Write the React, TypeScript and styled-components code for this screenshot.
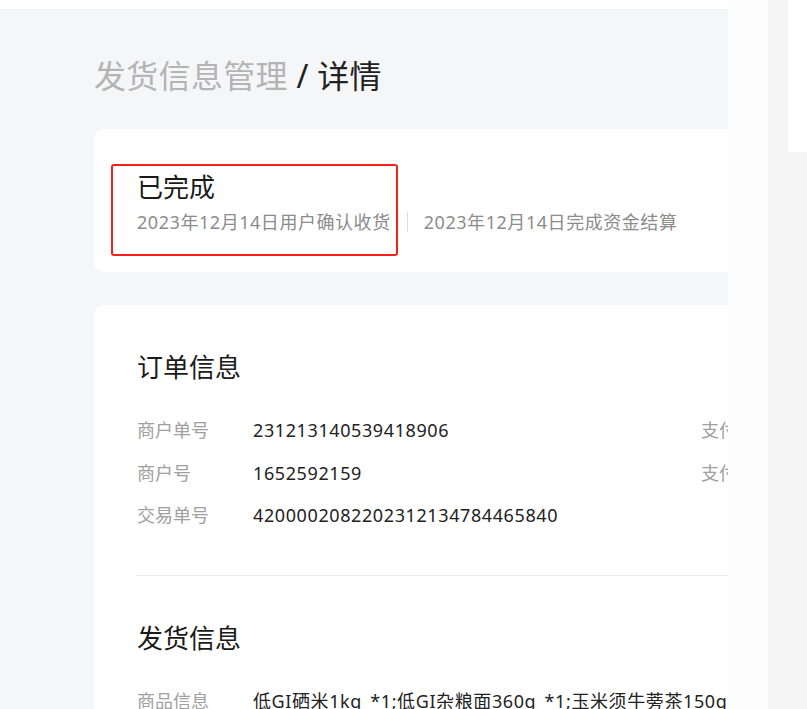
import React from "react";
import styled, { createGlobalStyle } from "styled-components";

const GlobalStyle = createGlobalStyle`
  html, body { margin: 0; padding: 0; background: #ffffff; }
  body {
    font-family: "Noto Sans", "Noto Sans CJK SC", sans-serif;
    color: #222222;
  }
`;

const Page = styled.div`
  display: flex;
  height: 709px;
  overflow: hidden;
  background: #ffffff;
`;

const Main = styled.main`
  width: 728px;
  flex: none;
  margin-top: 9px;
  padding: 45px 0 0 94px;
  box-sizing: border-box;
  background: #f5f6f8;
  overflow: hidden;
  display: flex;
  flex-direction: column;
`;

const Gutter = styled.div`
  width: 40px;
  flex: none;
  background: #fdfdfd;
`;

const SideTrack = styled.aside`
  width: 39px;
  flex: none;
  background: #f5f5f5;
  padding-left: 20px;
  box-sizing: border-box;
`;

const SidePanel = styled.div`
  height: 152px;
  background: #ffffff;
`;

const Title = styled.h1`
  margin: 0;
  font-size: 32px;
  line-height: 44px;
  font-weight: 400;
  color: #222222;
  white-space: nowrap;
  letter-spacing: 0.3px;
`;

const Crumb = styled.span`
  color: #b4b4b4;
`;

const Card = styled.section<{ $top: number; $padTop: number }>`
  position: relative;
  flex: none;
  width: 760px;
  margin-top: ${(p) => p.$top}px;
  padding: ${(p) => p.$padTop}px 0 0 43px;
  box-sizing: border-box;
  background: #ffffff;
  border-radius: 10px;
`;

const StatusCard = styled(Card)`
  height: 143px;
`;

const Status = styled.div`
  font-size: 26px;
  line-height: 36px;
  color: #1a1a1a;
`;

const Timeline = styled.div`
  display: flex;
  align-items: center;
  gap: 16px;
  margin-top: 4px;
  font-size: 18px;
  line-height: 26px;
  letter-spacing: 0.55px;
  color: #8c8c8c;
  white-space: nowrap;
`;

const Sep = styled.span`
  flex: none;
  width: 1px;
  height: 20px;
  background: #dedede;
`;

const Highlight = styled.div`
  position: absolute;
  left: 17px;
  top: 35px;
  width: 287px;
  height: 92px;
  box-sizing: border-box;
  border: 2px solid #f5201a;
  border-radius: 3px;
  pointer-events: none;
`;

const DetailCard = styled(Card)`
  min-height: 420px;
`;

const Heading = styled.h2`
  margin: 0;
  font-size: 26px;
  line-height: 36px;
  font-weight: 400;
  color: #1a1a1a;
`;

const Fields = styled.div`
  display: grid;
  grid-template-columns: 564px 1fr;
  row-gap: 16.5px;
  margin-top: 32px;
`;

const Field = styled.div`
  display: flex;
  font-size: 18px;
  line-height: 26px;
  white-space: nowrap;
`;

const Label = styled.span`
  width: 116px;
  flex: none;
  color: #a0a0a0;
`;

const Value = styled.span`
  color: #222222;
  letter-spacing: 0.6px;
  word-spacing: 3px;
`;

const Divider = styled.hr`
  margin: 47px 0 44px;
  border: none;
  height: 1px;
  background: #ebebeb;
`;

export default function App() {
  return (
    <>
      <GlobalStyle />
      <Page>
        <Main>
          <Title>
            <Crumb>发货信息管理</Crumb> / 详情
          </Title>
          <StatusCard $top={31} $padTop={40}>
            <Status>已完成</Status>
            <Timeline>
              <span>2023年12月14日用户确认收货</span>
              <Sep />
              <span>2023年12月14日完成资金结算</span>
            </Timeline>
            <Highlight />
          </StatusCard>
          <DetailCard $top={33} $padTop={44}>
            <Heading>订单信息</Heading>
            <Fields>
              <Field>
                <Label>商户单号</Label>
                <Value>231213140539418906</Value>
              </Field>
              <Field>
                <Label>支付方式</Label>
                <Value>微信支付</Value>
              </Field>
              <Field>
                <Label>商户号</Label>
                <Value>1652592159</Value>
              </Field>
              <Field>
                <Label>支付时间</Label>
                <Value>2023-12-13 14:05</Value>
              </Field>
              <Field>
                <Label>交易单号</Label>
                <Value>4200002082202312134784465840</Value>
              </Field>
            </Fields>
            <Divider />
            <Heading>发货信息</Heading>
            <Fields>
              <Field>
                <Label>商品信息</Label>
                <Value>低GI硒米1kg *1;低GI杂粮面360g *1;玉米须牛蒡茶150g *1</Value>
              </Field>
            </Fields>
          </DetailCard>
        </Main>
        <Gutter />
        <SideTrack>
          <SidePanel />
        </SideTrack>
      </Page>
    </>
  );
}
